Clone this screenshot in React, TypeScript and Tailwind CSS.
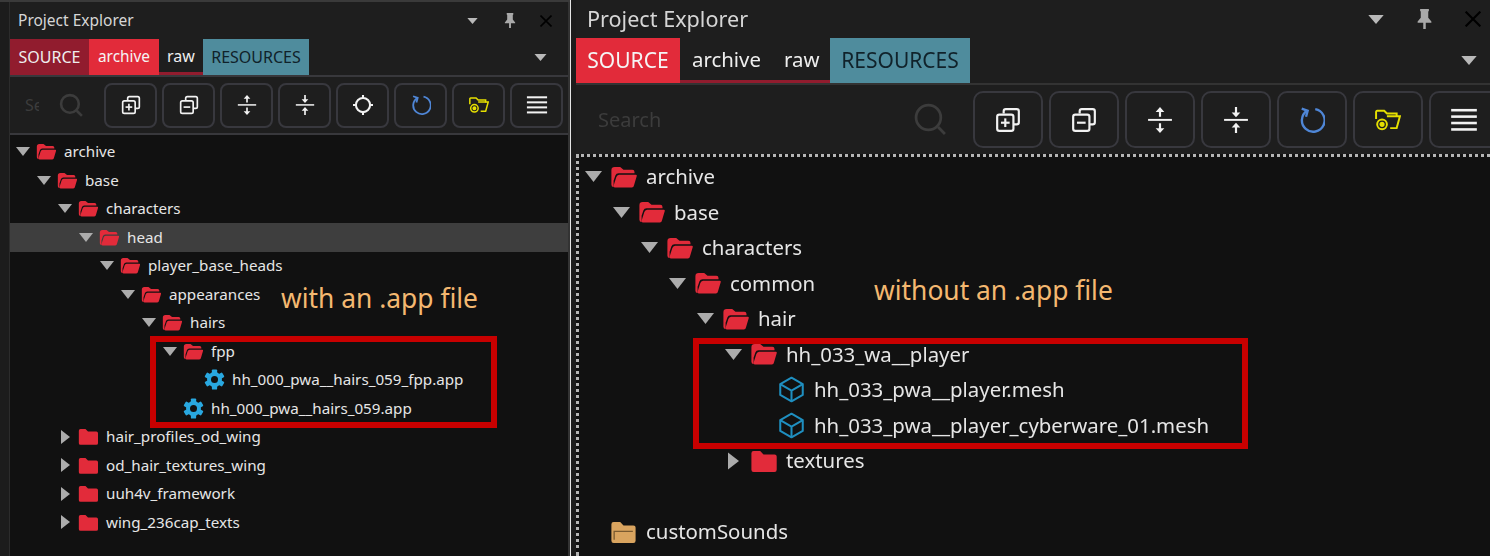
import React from "react";

type Kind = "open" | "closed" | "gear" | "cube" | "sounds";

interface Row {
  level: number;
  label: string;
  kind: Kind;
  selected?: boolean;
}

const leftRows: Row[] = [
  { level: 0, label: "archive", kind: "open" },
  { level: 1, label: "base", kind: "open" },
  { level: 2, label: "characters", kind: "open" },
  { level: 3, label: "head", kind: "open", selected: true },
  { level: 4, label: "player_base_heads", kind: "open" },
  { level: 5, label: "appearances", kind: "open" },
  { level: 6, label: "hairs", kind: "open" },
  { level: 7, label: "fpp", kind: "open" },
  { level: 8, label: "hh_000_pwa__hairs_059_fpp.app", kind: "gear" },
  { level: 7, label: "hh_000_pwa__hairs_059.app", kind: "gear" },
  { level: 2, label: "hair_profiles_od_wing", kind: "closed" },
  { level: 2, label: "od_hair_textures_wing", kind: "closed" },
  { level: 2, label: "uuh4v_framework", kind: "closed" },
  { level: 2, label: "wing_236cap_texts", kind: "closed" },
];

const rightRows: Row[] = [
  { level: 0, label: "archive", kind: "open" },
  { level: 1, label: "base", kind: "open" },
  { level: 2, label: "characters", kind: "open" },
  { level: 3, label: "common", kind: "open" },
  { level: 4, label: "hair", kind: "open" },
  { level: 5, label: "hh_033_wa__player", kind: "open" },
  { level: 6, label: "hh_033_pwa__player.mesh", kind: "cube" },
  { level: 6, label: "hh_033_pwa__player_cyberware_01.mesh", kind: "cube" },
  { level: 5, label: "textures", kind: "closed" },
];

function RowIcon({ kind }: { kind: Kind }) {
  if (kind === "open") {
    return (
      <svg viewBox="0 0 24 20" className="w-full h-full" fill="#e22b3a">
        <path d="M1 4a3 3 0 0 1 3-3h5l3 2.500h8a2 2 0 0 1 2 2v1H7.500a3 3 0 0 0-2.800 2L3 13.500V19a2 2 0 0 1-2-2z" />
        <path d="M8 8h15a1 1 0 0 1 1 1.300l-2.500 8.500a2 2 0 0 1-2 1.700H4.500a1.500 1.500 0 0 1-1.400-2L5.500 10a3 3 0 0 1 2.500-2z" />
      </svg>
    );
  }
  if (kind === "closed") {
    return (
      <svg viewBox="0 0 24 20" className="w-full h-full" fill="#e22b3a">
        <path d="M1 3a2 2 0 0 1 2-2h6l3 3h10a2 2 0 0 1 2 2v12a2 2 0 0 1-2 2H3a2 2 0 0 1-2-2z" />
      </svg>
    );
  }
  if (kind === "sounds") {
    return (
      <svg viewBox="0 0 24 20" className="w-full h-full">
        <path d="M1 3a2 2 0 0 1 2-2h6l3 3h9a2 2 0 0 1 2 2v12a2 2 0 0 1-2 2H3a2 2 0 0 1-2-2z" fill="#d9a45f" />
        <path d="M3.500 17V9.500h17" fill="none" stroke="#7a5a30" strokeWidth="1.200" />
      </svg>
    );
  }
  if (kind === "gear") {
    return (
      <svg viewBox="0 0 24 24" className="w-full h-full">
        <g fill="#29a8e0">
          <rect x="9" y="0.500" width="6" height="23" rx="1" />
          <rect x="9" y="0.500" width="6" height="23" rx="1" transform="rotate(60 12 12)" />
          <rect x="9" y="0.500" width="6" height="23" rx="1" transform="rotate(120 12 12)" />
        </g>
        <circle cx="12" cy="12" r="6.500" fill="none" stroke="#29a8e0" strokeWidth="4" />
        <circle cx="12" cy="12" r="4" fill="#111111" />
      </svg>
    );
  }
  return (
    <svg viewBox="0 0 24 24" className="w-full h-full" fill="none" stroke="#1f8fc0" strokeWidth="1.800" strokeLinejoin="round">
      <path d="M12 1.500l10 5.700v9.600l-10 5.700-10-5.700V7.200z" />
      <path d="M2 7.200l10 5.700 10-5.700M12 12.900v9.600" />
    </svg>
  );
}

function TreeRow({ row, big }: { row: Row; big: boolean }) {
  const indent = row.level * (big ? 28 : 21);
  return (
    <div
      className={`flex items-center ${big ? "h-[35.5px] text-[20.4px]" : "h-[28.5px] text-[15.2px]"} ${row.selected ? "bg-[#3e3e3e]" : ""}`}
      style={{ paddingLeft: indent + (big ? 5 : 6) }}
    >
      <div className={`flex items-center justify-center shrink-0 ${big ? "w-[18px] mr-[8px]" : "w-[14px] mr-[6px]"}`}>
        {row.kind === "open" && (
          <svg viewBox="0 0 14 9" className={big ? "w-[17px] h-[11px]" : "w-[14px] h-[9px]"}>
            <path d="M0 0h14L7 9z" fill="#acacac" />
          </svg>
        )}
        {row.kind === "closed" && (
          <svg viewBox="0 0 9 14" className={big ? "w-[11px] h-[18px]" : "w-[9px] h-[14px]"}>
            <path d="M0 0l9 7-9 7z" fill="#acacac" />
          </svg>
        )}
      </div>
      <div
        className={`shrink-0 ${
          row.kind === "gear"
            ? "w-[21px] h-[21px] mr-[7px]"
            : row.kind === "cube"
              ? "w-[27px] h-[27px] mr-[9px]"
              : big
                ? "w-[27px] h-[22px] mr-[9px]"
                : "w-[20px] h-[17px] mr-[8px]"
        }`}
      >
        <RowIcon kind={row.kind} />
      </div>
      <span className="text-[#e6e6e6] whitespace-nowrap">{row.label}</span>
    </div>
  );
}

function ToolIcon({ name }: { name: string }) {
  const white = "#f2f2f2";
  if (name === "expand" || name === "collapse") {
    return (
      <svg viewBox="0 0 24 24" className="w-full h-full" fill="none" stroke={white} strokeWidth="2">
        <path d="M8 6V4a2 2 0 0 1 2-2h10a2 2 0 0 1 2 2v10a2 2 0 0 1-2 2h-3" />
        <rect x="2" y="7" width="15" height="15" rx="2" />
        <path d="M5.500 14.500h8" />
        {name === "expand" && <path d="M9.500 10.500v8" />}
      </svg>
    );
  }
  if (name === "apart" || name === "together") {
    return (
      <svg viewBox="0 0 24 24" className="w-full h-full" fill={white}>
        <rect x="1" y="11" width="22" height="1.800" />
        {name === "apart" ? (
          <path d="M12 0l4 4.500h-3V9h-2V4.500H8zM12 24l4-4.500h-3V15h-2v4.500H8z" />
        ) : (
          <path d="M12 9.500l4-4.500h-3V0h-2v5H8zM12 14.500l4 4.500h-3v5h-2v-5H8z" />
        )}
      </svg>
    );
  }
  if (name === "locate") {
    return (
      <svg viewBox="0 0 24 24" className="w-full h-full" fill="none" stroke={white} strokeWidth="2.500">
        <circle cx="12" cy="12" r="8.500" />
        <path d="M12 0v4M12 20v4M0 12h4M20 12h4" />
      </svg>
    );
  }
  if (name === "refresh") {
    return (
      <svg viewBox="0 0 24 24" className="w-full h-full" fill="none" stroke="#4f86d6" strokeWidth="2.200">
        <path d="M7.500 3.500A10.500 10.500 0 1 0 15 2" />
        <path d="M2.500 1.500l5.500 2-1.500 5.500" />
      </svg>
    );
  }
  if (name === "folder") {
    return (
      <svg viewBox="0 0 24 20" className="w-full h-full" fill="none" stroke="#e6e000" strokeWidth="1.800">
        <path d="M1 9V2.500a1 1 0 0 1 1-1h6.500l2.500 2.500h9v3" />
        <path d="M11 6.500h12l-3 11h-6" />
        <circle cx="6.500" cy="14" r="4.500" />
        <circle cx="6.500" cy="14" r="1.500" fill="#e6e000" />
      </svg>
    );
  }
  return (
    <svg viewBox="0 0 24 24" className="w-full h-full" fill={white}>
      <rect x="1" y="2.500" width="22" height="2.200" />
      <rect x="1" y="8" width="22" height="2.200" />
      <rect x="1" y="13.500" width="22" height="2.200" />
      <rect x="1" y="19" width="22" height="2.200" />
    </svg>
  );
}

function Triangle({ className }: { className: string }) {
  return (
    <svg viewBox="0 0 12 7" className={className}>
      <path d="M0 0h12L6 7z" fill="#b9b9b9" />
    </svg>
  );
}

function Pin({ className }: { className: string }) {
  return (
    <svg viewBox="0 0 12 16" className={className}>
      <path d="M2.500 0h7v1.500L9 2v5l2.500 3v1h-4.500v5H5v-5H.500v-1L3 7V2l-.5-.5z" fill="#a9a9a9" />
    </svg>
  );
}

function Cross({ className }: { className: string }) {
  return (
    <svg viewBox="0 0 12 12" className={className} fill="none" stroke="#000000" strokeWidth="1.600">
      <path d="M.500.500l11 11M11.500.500l-11 11" />
    </svg>
  );
}

function LeftPanel() {
  const tools = ["expand", "collapse", "apart", "together", "locate", "refresh", "folder", "menu"];
  return (
    <div className="w-[570px] h-[556px] shrink-0 flex bg-[#1e1e1e] border-t-2 border-[#3a3a3a]">
      <div className="w-[10px] shrink-0 bg-[#1c1c1c] border-r border-[#2c2c2c]" />
      <div className="flex-1 min-w-0 flex flex-col border-r-2 border-[#333333]">
        <div className="h-[37px] flex items-center pl-[8px] pr-[16px]">
          <span className="text-[#d6d6d6] text-[15.5px]">Project Explorer</span>
          <Triangle className="w-[11px] h-[6px] ml-auto" />
          <Pin className="w-[12px] h-[15px] ml-[26px]" />
          <Cross className="w-[12px] h-[12px] ml-[24px]" />
        </div>
        <div className="h-[36px] flex items-stretch text-[16px]">
          <div className="w-[79px] bg-[#911c2e] text-[#eeeeee] flex items-center justify-center">SOURCE</div>
          <div className="w-[70px] bg-[#e22b3a] text-[#f5f5f5] text-[15.4px] flex items-center justify-center">archive</div>
          <div className="w-[44px] border-b-[3px] border-[#911c2e] text-[#eeeeee] flex items-center justify-center">raw</div>
          <div className="w-[106px] bg-[#4f8c9d] text-[#10222a] flex items-center justify-center">RESOURCES</div>
          <Triangle className="w-[13px] h-[7px] ml-auto mr-[21px] self-center" />
        </div>
        <div className="h-[56px] flex items-center border-y-2 border-[#38383c] pl-[15px] pr-[4px] box-content">
          <span className="w-[14px] overflow-hidden text-[#3c3c3c] text-[16px]">Search</span>
          <svg viewBox="0 0 24 24" className="w-[25px] h-[25px] shrink-0 ml-[20px]" fill="none" stroke="#3c3c3c" strokeWidth="2.500">
            <circle cx="10.500" cy="10.500" r="8.500" />
            <path d="M17 17l5 5" />
          </svg>
          <div className="flex gap-[5px] ml-[20px]">
            {tools.map((t) => (
              <div key={t} className="w-[53px] h-[45px] rounded-lg border-2 border-[#38383e] flex items-center justify-center">
                <div className={t === "menu" ? "w-[22px] h-[22px]" : "w-[20px] h-[20px]"}>
                  <ToolIcon name={t} />
                </div>
              </div>
            ))}
          </div>
        </div>
        <div className="flex-1 bg-[#111111] pt-[2.500px]">
          {leftRows.map((r) => (
            <TreeRow key={r.label} row={r} big={false} />
          ))}
        </div>
      </div>
    </div>
  );
}

function RightPanel() {
  const tools = ["expand", "collapse", "apart", "together", "refresh", "folder", "menu"];
  return (
    <div className="flex-1 min-w-0 h-[556px] flex flex-col bg-[#1e1e1e] overflow-hidden blur-[0.4px]">
      <div className="h-[38px] flex items-center pl-[11px] pr-[9px]">
        <span className="text-[#d6d6d6] text-[21.6px]">Project Explorer</span>
        <Triangle className="w-[16px] h-[9px] ml-auto" />
        <Pin className="w-[17px] h-[20px] ml-[32px]" />
        <Cross className="w-[16px] h-[16px] ml-[32px]" />
      </div>
      <div className="h-[45px] flex items-stretch text-[21px]">
        <div className="w-[104px] bg-[#e22b3a] text-[#f5f5f5] flex items-center justify-center">SOURCE</div>
        <div className="w-[150px] border-b-[3px] border-[#911c2e] text-[#eeeeee] text-[20.4px] flex items-center">
          <span className="ml-[12px]">archive</span>
          <span className="ml-[23px]">raw</span>
        </div>
        <div className="w-[140px] bg-[#4f8c9d] text-[#10222a] flex items-center justify-center">RESOURCES</div>
        <Triangle className="w-[16px] h-[9px] ml-auto mr-[13px] self-center" />
      </div>
      <div className="h-[71px] flex items-center border-t-2 border-[#333333] pl-[22px]">
        <span className="text-[#3c3c3c] text-[20px]">Search</span>
        <svg viewBox="0 0 24 24" className="w-[33px] h-[33px] shrink-0 ml-[253px]" fill="none" stroke="#3c3c3c" strokeWidth="2">
          <circle cx="10.500" cy="10.500" r="9" />
          <path d="M17.500 17.500l5 5" />
        </svg>
        <div className="flex gap-[6px] ml-[26px] shrink-0">
          {tools.map((t) => (
            <div key={t} className="w-[70px] h-[57px] shrink-0 rounded-[10px] border-2 border-[#38383e] flex items-center justify-center">
              <div className={t === "menu" ? "w-[28px] h-[28px]" : "w-[26px] h-[26px]"}>
                <ToolIcon name={t} />
              </div>
            </div>
          ))}
        </div>
      </div>
      <div className="flex-1 bg-[#111111] border-t-[3px] border-l-[3px] border-dotted border-[#b5b5b5] pt-[2px]">
        {rightRows.map((r) => (
          <TreeRow key={r.label} row={r} big />
        ))}
        <div className="h-[35.5px]" />
        <TreeRow row={{ level: 0, label: "customSounds", kind: "sounds" }} big />
      </div>
    </div>
  );
}

export default function App() {
  return (
    <div className="relative w-[1490px] h-[556px] flex overflow-hidden bg-[#1c1c1c] font-['Noto_Sans','Open_Sans',sans-serif]">
      <LeftPanel />
      <div className="w-[6px] shrink-0 bg-[#1c1c1c] border-l border-[#e5e5e5]" />
      <RightPanel />

      {/* annotations drawn on top of the two screenshots */}
      <div className="absolute left-[150px] top-[336px] w-[347px] h-[92px] border-[6px] border-[#c80000]" />
      <div className="absolute left-[693px] top-[338px] w-[555px] h-[111px] border-[6px] border-[#c80000]" />
      <span className="absolute left-[281px] top-[281px] text-[26.4px] leading-[34px] text-[#f4b870]">with an .app file</span>
      <span className="absolute left-[874px] top-[273px] text-[26.4px] leading-[34px] text-[#f4b870]">without an .app file</span>
    </div>
  );
}
